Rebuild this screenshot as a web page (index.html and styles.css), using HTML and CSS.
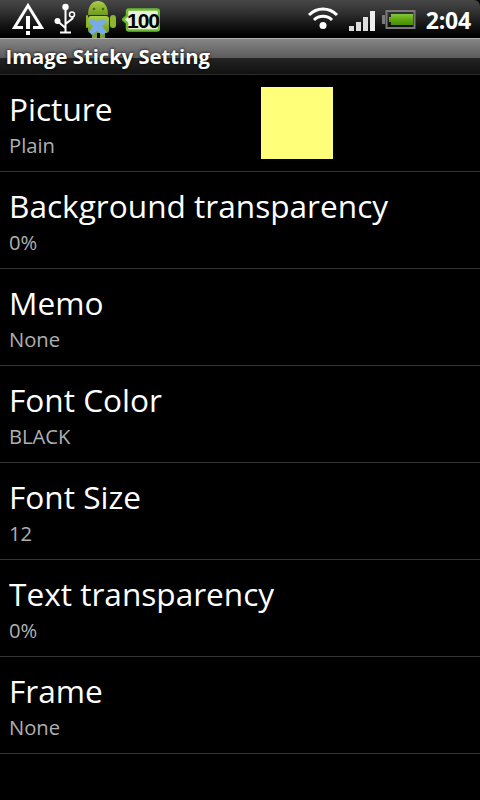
FILE: index.html
```html
<!DOCTYPE html>
<html lang="en">
<head>
<meta charset="utf-8">
<title>Image Sticky Setting</title>
<link rel="stylesheet" href="styles.css">
</head>
<body>
<div class="status">
  <div class="status-left">
    <svg class="ic-warn" width="34" height="36" viewBox="0 0 34 36"><path d="M12 27.500 H3.500 L17 5.500 L30.500 27.500 H22" fill="none" stroke="#fff" stroke-width="3"/><rect x="15" y="16" width="4" height="13" fill="#fff"/><rect x="15" y="31" width="4" height="4" fill="#fff"/></svg>
    <svg class="ic-usb" width="24" height="34" viewBox="0 0 24 34"><path d="M11.500 5 V31 M6 31.500 H17 M11.500 27 L4 20.500 M11.500 23 L18.500 17.500 V15" fill="none" stroke="#fff" stroke-width="2"/><circle cx="11.500" cy="6" r="3.200" fill="#fff"/><circle cx="3.500" cy="20" r="3" fill="#fff"/><circle cx="18" cy="13.500" r="2.500" fill="none" stroke="#fff" stroke-width="1.500"/></svg>
    <svg class="ic-droid" width="30" height="38" viewBox="0 0 30 38"><defs><linearGradient id="dg" x1="0" y1="0" x2="0" y2="1"><stop offset="0" stop-color="#a9cf46"/><stop offset="1" stop-color="#6f9a1c"/></linearGradient></defs><path d="M2 15 C2 6 6 1 12 1 C18 1 22 6 22 15 Z" fill="url(#dg)"/><rect x="2" y="16" width="21" height="17" rx="3" fill="url(#dg)"/><rect x="0" y="15" width="2" height="13" rx="1" fill="#8fb52f"/><rect x="24" y="15" width="6" height="13" rx="3" fill="#8fb52f"/><rect x="6" y="32" width="5" height="6" fill="#7da323"/><rect x="14" y="32" width="5" height="6" fill="#7da323"/><circle cx="8" cy="9" r="1.300" fill="#4a6420"/><circle cx="17" cy="9" r="1.300" fill="#4a6420"/><path d="M5 19 L11 21 L17 19 L21 22 L16 26 L21 32 L16 35 L11 31 L6 35 L3 32 L7 26 L3 22 Z" fill="#78ace8"/></svg>
    <svg class="ic-hundred" width="38" height="24" viewBox="0 0 38 24"><path d="M1 11.500 L5 8 V3.500 Q5 1.500 7 1.500 H35 Q37 1.500 37 3.500 V20.500 Q37 22.500 35 22.500 H7 Q5 22.500 5 20.500 V15 Z" fill="#e6f3d8" stroke="#6cbc30" stroke-width="2.500"/><text x="21" y="19.500" class="hundred-text">100</text></svg>
  </div>
  <div class="status-right">
    <svg class="ic-wifi" width="32" height="32" viewBox="0 0 32 32"><path d="M2 12 C10 4 22 4 30 12 M7 17 C12 12 20 12 25 17" fill="none" stroke="#fff" stroke-width="3"/><circle cx="16" cy="22.500" r="3.500" fill="#fff"/></svg>
    <div class="signal"><i class="b1"></i><i class="b2"></i><i class="b3"></i><i class="b4"></i></div>
    <svg class="ic-battery" width="34" height="19" viewBox="0 0 34 19"><defs><linearGradient id="bg" x1="0" y1="0" x2="0" y2="1"><stop offset="0" stop-color="#85c83c"/><stop offset="0.5" stop-color="#5fa810"/><stop offset="1" stop-color="#4a8c00"/></linearGradient></defs><path d="M3 5 H0 V14 H3 Z" fill="#7a7a7a"/><rect x="4.500" y="1" width="28" height="17" fill="none" stroke="#7a7a7a" stroke-width="2"/><path d="M7 7 H9 V4 H31 V15 H9 V12 H7 Z" fill="url(#bg)"/></svg>
    <span class="clock">2:04</span>
  </div>
</div>
<div class="title">Image Sticky Setting</div>
<div class="list">
  <div class="row"><div class="row-text"><div class="name">Picture</div><div class="value">Plain</div></div><div class="swatch"></div></div>
  <div class="row"><div class="row-text"><div class="name">Background transparency</div><div class="value">0%</div></div></div>
  <div class="row"><div class="row-text"><div class="name">Memo</div><div class="value">None</div></div></div>
  <div class="row"><div class="row-text"><div class="name">Font Color</div><div class="value">BLACK</div></div></div>
  <div class="row"><div class="row-text"><div class="name">Font Size</div><div class="value">12</div></div></div>
  <div class="row"><div class="row-text"><div class="name">Text transparency</div><div class="value">0%</div></div></div>
  <div class="row"><div class="row-text"><div class="name">Frame</div><div class="value">None</div></div></div>
</div>
</body>
</html>
```
FILE: styles.css
```css
* { box-sizing: border-box; }
html, body { margin: 0; padding: 0; background: #000; }
body { width: 480px; height: 800px; overflow: hidden; font-family: "Open Sans", "Noto Sans", sans-serif; color: #fff; }
.status { height: 38px; display: flex; justify-content: space-between; align-items: flex-start; background: linear-gradient(#474747, #333 30%, #111 70%, #000 95%); border-top-right-radius: 6px; overflow: hidden; }
.status-left { display: flex; align-items: flex-start; padding-left: 11px; }
.ic-usb { margin: 1px 0 0 9px; }
.ic-droid { margin: 0 0 0 8px; }
.ic-hundred { margin: 8px 0 0 6px; }
.hundred-text { font: bold 21px "Liberation Sans", sans-serif; fill: #000; text-anchor: middle; letter-spacing: -1px; }
.status-right { display: flex; align-items: flex-start; padding-right: 9px; }
.ic-wifi { margin: 3px 0 0 -2px; }
.signal { display: flex; align-items: flex-end; gap: 2px; height: 20px; margin: 11px 0 0 10px; }
.signal i { display: block; width: 5px; background: #ddd; }
.signal .b1 { height: 5px; }
.signal .b2 { height: 9px; }
.signal .b3 { height: 14px; }
.signal .b4 { height: 20px; background: #eee; }
.ic-battery { margin: 10px 0 0 7px; }
.clock { font-size: 23px; font-weight: 700; line-height: 28px; margin: 6px 0 0 10px; letter-spacing: -0.2px; }
.title { height: 37px; padding: 3px 6px 0 5.500px; font-size: 20.200px; font-weight: 700; line-height: 28px; color: #fff; border-top: 1px solid #b0b0b0; border-bottom: 1px solid #2c2c2c; background: linear-gradient(#858585 0, #5c5c5c 53%, #242424 53%, #111 100%); text-shadow: 0 0 3px #000; }
.list { display: flex; flex-direction: column; }
.row { height: 97px; display: flex; align-items: flex-start; padding: 12px 0 0 9px; border-bottom: 1px solid #333; }
.row-text { width: 252px; white-space: nowrap; }
.name { font-size: 31.600px; line-height: 43px; color: #fff; }
.value { font-size: 20.200px; line-height: 28px; margin-top: 1px; color: #b0b0b0; }
.swatch { width: 72px; height: 72px; background: #ffff7a; flex: none; }
```
